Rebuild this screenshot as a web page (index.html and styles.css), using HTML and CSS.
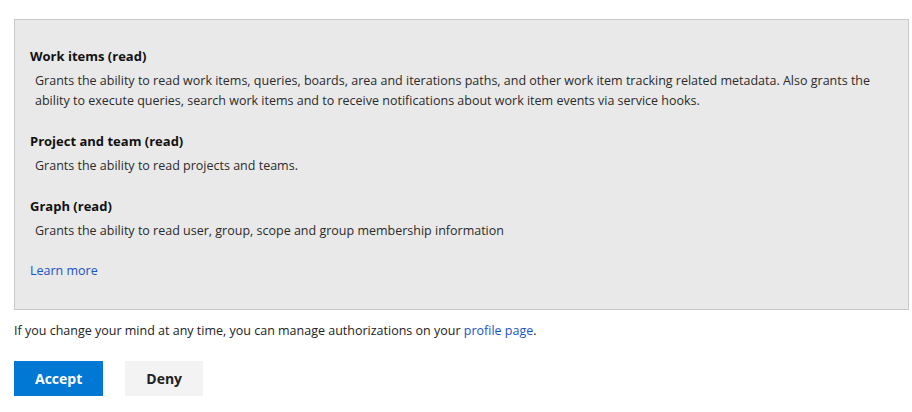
FILE: index.html
```html
<!DOCTYPE html>
<html>
<head>
<meta charset="utf-8">
<link rel="stylesheet" href="styles.css">
</head>
<body>
<div class="page">
  <div class="scopes">
    <div class="scope">
      <div class="scope-title">Work items (read)</div>
      <div class="scope-desc">Grants the ability to read work items, queries, boards, area and iterations paths, and other work item tracking related metadata. Also grants the ability to execute queries, search work items and to receive notifications about work item events via service hooks.</div>
    </div>
    <div class="scope">
      <div class="scope-title">Project and team (read)</div>
      <div class="scope-desc">Grants the ability to read projects and teams.</div>
    </div>
    <div class="scope">
      <div class="scope-title">Graph (read)</div>
      <div class="scope-desc">Grants the ability to read user, group, scope and group membership information</div>
    </div>
    <a class="link learn" href="#">Learn more</a>
  </div>
  <p class="note">If you change your mind at any time, you can manage authorizations on your <a class="link" href="#">profile page</a>.</p>
  <div class="actions">
    <button class="btn primary">Accept</button>
    <button class="btn secondary">Deny</button>
  </div>
</div>
</body>
</html>
```
FILE: styles.css
```css
html, body {
  margin: 0;
  padding: 0;
  background: #ffffff;
}
body {
  font-family: "Open Sans", "Noto Sans", sans-serif;
  font-size: 12.5px;
  line-height: 20px;
  color: #222222;
}
.page {
  padding: 19px 3px 0 14px;
}
.scopes {
  background: #e9e9e9;
  border: 1px solid #c8c8c8;
  padding: 26px 16px 28px 15px;
}
.scope {
  margin-bottom: 20px;
}
.scope-title {
  font-size: 13px;
  font-weight: 700;
  color: #111111;
  margin-bottom: 5px;
}
.scope-desc {
  padding-left: 5px;
  color: #2b2b2b;
}
.link {
  color: #1a53c6;
  text-decoration: none;
}
.learn {
  display: inline-block;
}
.note {
  margin: 11px 0 0 0;
}
.actions {
  display: flex;
  gap: 22px;
  margin-top: 20px;
}
.btn {
  font-family: inherit;
  font-size: 14px;
  font-weight: 700;
  border: none;
  height: 35px;
  padding: 0 21px;
}
.primary {
  background: #0078d4;
  color: #ffffff;
}
.secondary {
  background: #f3f3f3;
  color: #222222;
}
```
